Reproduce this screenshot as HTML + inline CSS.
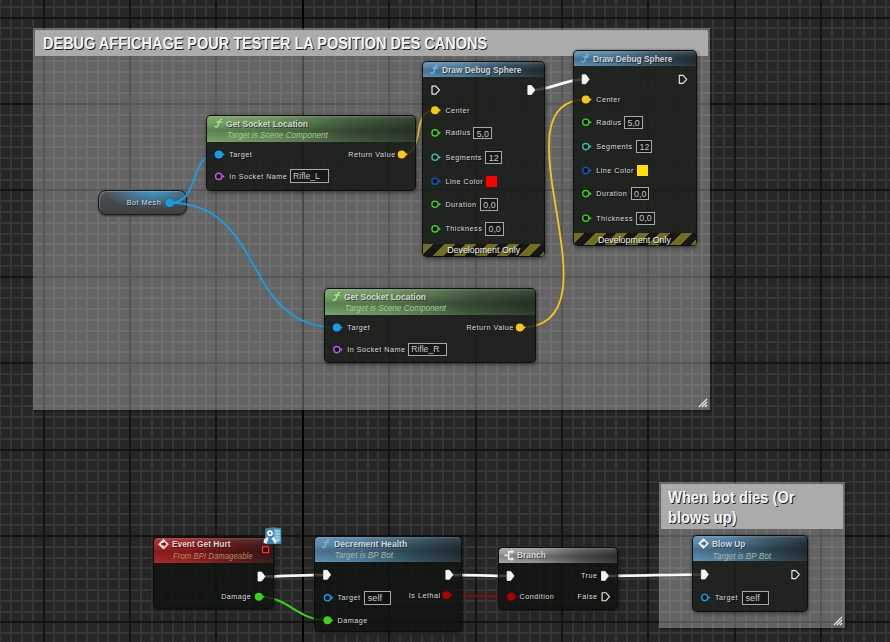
<!DOCTYPE html><html><head><meta charset="utf-8"><style>

*{margin:0;padding:0;box-sizing:border-box}
html,body{width:890px;height:642px;overflow:hidden;background:#262626;font-family:"Liberation Sans",sans-serif}
.abs{position:absolute}
.cm{position:absolute;background:rgba(255,255,255,0.286);box-shadow:1px 1px 2px rgba(0,0,0,0.35);outline:1px solid rgba(0,0,0,0.12)}
.cmh{position:absolute;background:#ababab;border-radius:0 2px 0 0}
.cmt{position:absolute;color:#f4f4f4;font-weight:bold;white-space:nowrap;transform-origin:0 0;transform:scaleX(0.89);text-shadow:1px 1px 0 #1a1a1a}
.node{position:absolute;border-radius:5px;background:rgba(15,17,15,0.8);border:1px solid rgba(14,14,14,0.95);box-shadow:0 0 3px rgba(0,0,0,0.35),1px 2px 4px rgba(0,0,0,0.35);overflow:hidden}
.hdr{position:absolute;left:0;top:0;right:0}
.ttl{position:absolute;color:#d6d6d6;font-weight:bold;white-space:nowrap;transform-origin:0 0;text-shadow:1px 1px 0 rgba(0,0,0,0.5)}
.sub{position:absolute;font-style:italic;white-space:nowrap;transform-origin:0 0}
.lbl{position:absolute;color:#dedede;white-space:nowrap;font-size:7.2px;line-height:10px;letter-spacing:0.5px;text-shadow:1px 1px 0 rgba(0,0,0,0.7)}
.box{position:absolute;border:1px solid #a8a8a8;background:rgba(10,10,10,0.45);color:#c8c8c8;font-size:9px;line-height:11px;text-align:left;padding-left:2.5px;padding-top:0.8px;white-space:nowrap}

</style></head><body>
<svg width="890" height="642" style="position:absolute;left:0;top:0"><rect width="890" height="642" fill="#262626"/><path fill="#363636" d="M-1 0h2V642h-2zM10 0h2V642h-2zM21 0h2V642h-2zM32 0h2V642h-2zM53 0h2V642h-2zM64 0h2V642h-2zM75 0h2V642h-2zM86 0h2V642h-2zM97 0h2V642h-2zM107 0h2V642h-2zM118 0h2V642h-2zM140 0h2V642h-2zM151 0h2V642h-2zM161 0h2V642h-2zM172 0h2V642h-2zM183 0h2V642h-2zM194 0h2V642h-2zM205 0h2V642h-2zM226 0h2V642h-2zM237 0h2V642h-2zM248 0h2V642h-2zM259 0h2V642h-2zM269 0h2V642h-2zM280 0h2V642h-2zM291 0h2V642h-2zM313 0h2V642h-2zM323 0h2V642h-2zM334 0h2V642h-2zM345 0h2V642h-2zM356 0h2V642h-2zM367 0h2V642h-2zM377 0h2V642h-2zM399 0h2V642h-2zM410 0h2V642h-2zM421 0h2V642h-2zM431 0h2V642h-2zM442 0h2V642h-2zM453 0h2V642h-2zM464 0h2V642h-2zM485 0h2V642h-2zM496 0h2V642h-2zM507 0h2V642h-2zM518 0h2V642h-2zM529 0h2V642h-2zM539 0h2V642h-2zM550 0h2V642h-2zM572 0h2V642h-2zM583 0h2V642h-2zM593 0h2V642h-2zM604 0h2V642h-2zM615 0h2V642h-2zM626 0h2V642h-2zM637 0h2V642h-2zM658 0h2V642h-2zM669 0h2V642h-2zM680 0h2V642h-2zM691 0h2V642h-2zM701 0h2V642h-2zM712 0h2V642h-2zM723 0h2V642h-2zM745 0h2V642h-2zM755 0h2V642h-2zM766 0h2V642h-2zM777 0h2V642h-2zM788 0h2V642h-2zM799 0h2V642h-2zM809 0h2V642h-2zM831 0h2V642h-2zM842 0h2V642h-2zM853 0h2V642h-2zM863 0h2V642h-2zM874 0h2V642h-2zM885 0h2V642h-2zM0 6h890v2H0zM0 27h890v2H0zM0 38h890v2H0zM0 49h890v2H0zM0 60h890v2H0zM0 71h890v2H0zM0 81h890v2H0zM0 92h890v2H0zM0 114h890v2H0zM0 125h890v2H0zM0 135h890v2H0zM0 146h890v2H0zM0 157h890v2H0zM0 168h890v2H0zM0 179h890v2H0zM0 200h890v2H0zM0 211h890v2H0zM0 222h890v2H0zM0 233h890v2H0zM0 243h890v2H0zM0 254h890v2H0zM0 265h890v2H0zM0 287h890v2H0zM0 297h890v2H0zM0 308h890v2H0zM0 319h890v2H0zM0 330h890v2H0zM0 341h890v2H0zM0 351h890v2H0zM0 373h890v2H0zM0 384h890v2H0zM0 395h890v2H0zM0 405h890v2H0zM0 416h890v2H0zM0 427h890v2H0zM0 438h890v2H0zM0 459h890v2H0zM0 470h890v2H0zM0 481h890v2H0zM0 492h890v2H0zM0 503h890v2H0zM0 513h890v2H0zM0 524h890v2H0zM0 546h890v2H0zM0 557h890v2H0zM0 567h890v2H0zM0 578h890v2H0zM0 589h890v2H0zM0 600h890v2H0zM0 611h890v2H0zM0 632h890v2H0z"/><path fill="#141414" d="M43 0h2V642h-2zM129 0h2V642h-2zM215 0h2V642h-2zM302 0h2V642h-2zM388 0h2V642h-2zM475 0h2V642h-2zM561 0h2V642h-2zM647 0h2V642h-2zM734 0h2V642h-2zM820 0h2V642h-2zM0 17h890v2H0zM0 103h890v2H0zM0 189h890v2H0zM0 276h890v2H0zM0 362h890v2H0zM0 449h890v2H0zM0 535h890v2H0zM0 621h890v2H0z"/><path fill="#000" d="M302 0h2V642h-2z"/></svg>
<div class="cm" style="left:33px;top:28px;width:677px;height:382px"></div>
<div class="cmh" style="left:35px;top:30px;width:673px;height:25.5px"></div>
<div class="cmt" style="left:42.5px;top:32.5px;font-size:16.3px;line-height:20px;transform:scaleX(0.89)">DEBUG AFFICHAGE POUR TESTER LA POSITION DES CANONS</div>
<svg style="position:absolute;left:698px;top:398px" width="10" height="10"><path d="M1 9L9 1M4 9L9 4M7 9L9 7" stroke="#f0f0f0" stroke-width="1.1" fill="none"/></svg>
<div class="cm" style="left:658.5px;top:481.5px;width:186.5px;height:146.10000000000002px"></div>
<div class="cmh" style="left:661px;top:484px;width:182px;height:45px"></div>
<div class="cmt" style="left:667.5px;top:488.3px;font-size:16.3px;line-height:19.6px;transform:scaleX(0.903)">When bot dies (Or<br>blows up)</div>
<svg style="position:absolute;left:833px;top:615.6px" width="10" height="10"><path d="M1 9L9 1M4 9L9 4M7 9L9 7" stroke="#f0f0f0" stroke-width="1.1" fill="none"/></svg>
<div class="abs" style="left:98.2px;top:190.3px;width:89.3px;height:25.2px;border-radius:8px;border:1.5px solid #161616;background:radial-gradient(ellipse 55% 80% at 62% 0%, rgba(60,165,220,0.85) 0%, rgba(60,160,215,0.4) 55%, rgba(60,160,215,0) 100%),linear-gradient(to bottom,#50555a 0%,#45484b 55%,#3d3f41 100%);box-shadow:0 1px 2px rgba(0,0,0,0.5), inset 1px 1px 0 rgba(255,255,255,0.22)"></div>
<div class="lbl" style="top:198.4px;font-size:7.2px;left:126.8px;">Bot Mesh</div>
<svg class="abs" style="left:0;top:0" width="890" height="642"><path d="M169.7 202.9C202.2 202.9 186.2 154.4 218.7 154.4" stroke="#16a0e4" stroke-width="1.8" fill="none"/><path d="M169.7 202.9C267.2 202.9 240.0 327.6 337.5 327.6" stroke="#16a0e4" stroke-width="1.8" fill="none"/><path d="M401.7 154.4C427.5 154.4 409.2 110.3 435 110.3" stroke="#f7c61a" stroke-width="1.8" fill="none"/><path d="M520.5 327.6C628.0433333333333 327.6 488.0333333333333 99.6 585.8 99.6" stroke="#f7c61a" stroke-width="1.8" fill="none"/><path d="M531.2 90C552.7666666666668 90 563.6333333333333 79.3 585.2 79.3" stroke="#f8f8f8" stroke-width="2.7" fill="none"/><path d="M261.3 576.5C283.7666666666667 576.5 304.5333333333333 574.8 327 574.8" stroke="#f8f8f8" stroke-width="2.7" fill="none"/><path d="M449.2 574.8C469.96666666666664 574.8 489.6333333333333 575.9 510.4 575.9" stroke="#f8f8f8" stroke-width="2.7" fill="none"/><path d="M604.8 575.9C638.5666666666666 575.9 670.9333333333334 574.5 704.7 574.5" stroke="#f8f8f8" stroke-width="2.7" fill="none"/><path d="M258.8 596.8C289.53333333333336 596.8 296.76666666666665 620.3 327.5 620.3" stroke="#3bd21a" stroke-width="2" fill="none"/><path d="M446.4 595.2C468.46666666666664 595.2 489.1333333333333 596.6 511.2 596.6" stroke="#a80000" stroke-width="1.5" fill="none"/></svg>
<div class="node" style="left:206.3px;top:114.9px;width:209.59999999999997px;height:76.19999999999999px"><div class="hdr" style="height:26.0px;background:linear-gradient(to bottom, rgba(255,255,255,0.20) 0px, rgba(255,255,255,0.06) 2.5px, rgba(0,0,0,0.0) 30%, rgba(0,0,0,0.20) 55%, rgba(0,0,0,0.05) 85%, rgba(255,255,255,0.03) 100%),linear-gradient(to right, #74a166 0%, #66905a 30%, #40573c 68%, #2c3a2c 100%)"></div></div>
<div class="ttl" style="left:226.2px;top:117.60000000000001px;font-size:9.4px;line-height:11.4px;transform:scaleX(0.905);">Get Socket Location</div>
<div class="sub" style="left:226.7px;top:130.9px;font-size:8.2px;line-height:10.2px;color:#a9c896;transform:scaleX(1.0)">Target is Scene Component</div>
<div class="lbl" style="top:149.8px;font-size:7.2px;left:229.2px;">Target</div>
<div class="lbl" style="top:171.8px;font-size:7.2px;left:229.2px;">In Socket Name</div>
<div class="box" style="left:289.6px;top:169.4px;width:39.0px;height:13.200000000000017px;font-size:8.6px;line-height:11.200000000000017px">Rifle_L</div>
<div class="lbl" style="top:149.8px;font-size:7.2px;right:494.3px;">Return Value</div>
<div class="node" style="left:324.3px;top:288.1px;width:211.49999999999994px;height:74.59999999999997px"><div class="hdr" style="height:26.0px;background:linear-gradient(to bottom, rgba(255,255,255,0.20) 0px, rgba(255,255,255,0.06) 2.5px, rgba(0,0,0,0.0) 30%, rgba(0,0,0,0.20) 55%, rgba(0,0,0,0.05) 85%, rgba(255,255,255,0.03) 100%),linear-gradient(to right, #74a166 0%, #66905a 30%, #40573c 68%, #2c3a2c 100%)"></div></div>
<div class="ttl" style="left:344.3px;top:290.8px;font-size:9.4px;line-height:11.4px;transform:scaleX(0.905);">Get Socket Location</div>
<div class="sub" style="left:344.8px;top:304.1px;font-size:8.2px;line-height:10.2px;color:#a9c896;transform:scaleX(1.0)">Target is Scene Component</div>
<div class="lbl" style="top:323.0px;font-size:7.2px;left:347.3px;">Target</div>
<div class="lbl" style="top:345.0px;font-size:7.2px;left:347.3px;">In Socket Name</div>
<div class="box" style="left:407.70000000000005px;top:342.6px;width:39.0px;height:13.199999999999989px;font-size:8.6px;line-height:11.199999999999989px">Rifle_R</div>
<div class="lbl" style="top:323.0px;font-size:7.2px;right:376.20000000000005px;">Return Value</div>
<div class="node" style="left:422.3px;top:61.1px;width:122.30000000000001px;height:195.6px"><div class="hdr" style="height:15.199999999999996px;background:linear-gradient(to bottom, rgba(255,255,255,0.20) 0px, rgba(255,255,255,0.06) 2.5px, rgba(0,0,0,0.0) 30%, rgba(0,0,0,0.20) 55%, rgba(0,0,0,0.05) 85%, rgba(255,255,255,0.03) 100%),linear-gradient(to right, #5d8cae 0%, #4f7d9e 30%, #33505f 68%, #263139 100%)"></div></div>
<div class="ttl" style="left:441.7px;top:64.1px;font-size:9.4px;line-height:11.4px;transform:scaleX(0.89);">Draw Debug Sphere</div>
<div class="lbl" style="top:105.7px;font-size:7.2px;left:445.4px;">Center</div>
<div class="lbl" style="top:128.29999999999998px;font-size:7.2px;left:445.4px;">Radius</div>
<div class="lbl" style="top:152.70000000000002px;font-size:7.2px;left:445.4px;">Segments</div>
<div class="lbl" style="top:176.6px;font-size:7.2px;left:445.4px;">Line Color</div>
<div class="lbl" style="top:199.70000000000002px;font-size:7.2px;left:445.4px;">Duration</div>
<div class="lbl" style="top:224.29999999999998px;font-size:7.2px;left:445.4px;">Thickness</div>
<div class="box" style="left:473.2px;top:127.0px;width:18.69999999999999px;height:12.399999999999977px;font-size:8.8px;line-height:10.399999999999977px">5,0</div>
<div class="box" style="left:485.29999999999995px;top:150.8px;width:16.400000000000034px;height:13.0px;font-size:8.8px;line-height:11.0px">12</div>
<div class="abs" style="left:486.2px;top:175.5px;width:11.099999999999966px;height:11.099999999999994px;background:#ff0000"></div>
<div class="box" style="left:479.79999999999995px;top:197.89999999999998px;width:18.600000000000023px;height:13.0px;font-size:8.8px;line-height:11.0px">0,0</div>
<div class="box" style="left:485.0px;top:222.3px;width:18.799999999999955px;height:13.399999999999977px;font-size:8.8px;line-height:11.399999999999977px">0,0</div>
<div class="abs" style="left:423.3px;top:243.89999999999998px;width:120.30000000000001px;height:11.8px;border-radius:0 0 2px 2px;background:repeating-linear-gradient(135deg, #716e22 0px, #716e22 7.6px, #161616 7.6px, #161616 15.2px)"></div>
<div class="lbl" style="left:422.4px;width:122.5px;text-align:center;top:245.2px;font-size:8.9px;letter-spacing:0;line-height:10px;color:#f0f0f0;text-shadow:1px 1px 0 rgba(0,0,0,0.8)">Development Only</div>
<div class="node" style="left:573.3px;top:49.9px;width:123.45000000000005px;height:195.7px"><div class="hdr" style="height:15.199999999999996px;background:linear-gradient(to bottom, rgba(255,255,255,0.20) 0px, rgba(255,255,255,0.06) 2.5px, rgba(0,0,0,0.0) 30%, rgba(0,0,0,0.20) 55%, rgba(0,0,0,0.05) 85%, rgba(255,255,255,0.03) 100%),linear-gradient(to right, #5d8cae 0%, #4f7d9e 30%, #33505f 68%, #263139 100%)"></div></div>
<div class="ttl" style="left:592.5px;top:53.4px;font-size:9.4px;line-height:11.4px;transform:scaleX(0.89);">Draw Debug Sphere</div>
<div class="lbl" style="top:95.0px;font-size:7.2px;left:596.2px;">Center</div>
<div class="lbl" style="top:117.6px;font-size:7.2px;left:596.2px;">Radius</div>
<div class="lbl" style="top:142.0px;font-size:7.2px;left:596.2px;">Segments</div>
<div class="lbl" style="top:165.9px;font-size:7.2px;left:596.2px;">Line Color</div>
<div class="lbl" style="top:189.0px;font-size:7.2px;left:596.2px;">Duration</div>
<div class="lbl" style="top:213.6px;font-size:7.2px;left:596.2px;">Thickness</div>
<div class="box" style="left:624.0px;top:116.30000000000001px;width:18.700000000000045px;height:12.399999999999977px;font-size:8.8px;line-height:10.399999999999977px">5,0</div>
<div class="box" style="left:636.1px;top:140.1px;width:16.399999999999977px;height:13.0px;font-size:8.8px;line-height:11.0px">12</div>
<div class="abs" style="left:637.0px;top:164.8px;width:11.100000000000023px;height:11.099999999999994px;background:#ffe000"></div>
<div class="box" style="left:630.6px;top:187.2px;width:18.600000000000023px;height:13.0px;font-size:8.8px;line-height:11.0px">0,0</div>
<div class="box" style="left:635.8000000000001px;top:211.6px;width:18.799999999999955px;height:13.400000000000006px;font-size:8.8px;line-height:11.400000000000006px">0,0</div>
<div class="abs" style="left:574.3px;top:232.79999999999998px;width:121.45000000000005px;height:11.8px;border-radius:0 0 2px 2px;background:repeating-linear-gradient(135deg, #716e22 0px, #716e22 7.6px, #161616 7.6px, #161616 15.2px)"></div>
<div class="lbl" style="left:573.2px;width:122.5px;text-align:center;top:234.5px;font-size:8.9px;letter-spacing:0;line-height:10px;color:#f0f0f0;text-shadow:1px 1px 0 rgba(0,0,0,0.8)">Development Only</div>
<div class="node" style="left:153.1px;top:536.7px;width:120.6px;height:72.5px"><div class="hdr" style="height:25.299999999999955px;background:linear-gradient(to bottom, rgba(255,255,255,0.20) 0px, rgba(255,255,255,0.06) 2.5px, rgba(0,0,0,0.0) 30%, rgba(0,0,0,0.20) 55%, rgba(0,0,0,0.05) 85%, rgba(255,255,255,0.03) 100%),linear-gradient(to right, #a82626 0%, #9a2020 30%, #5e1a1a 68%, #3a1c1c 100%)"></div></div>
<div class="ttl" style="left:172px;top:538.2px;font-size:9.4px;line-height:11.4px;transform:scaleX(0.89);">Event Get Hurt</div>
<div class="sub" style="left:172.5px;top:551.6px;font-size:8.2px;line-height:10.2px;color:#b08a6a;transform:scaleX(0.956)">From BPI Damageable</div>
<div class="lbl" style="top:592.1999999999999px;font-size:7.2px;right:638.7px;">Damage</div>
<div class="node" style="left:314.2px;top:535.6px;width:147.40000000000003px;height:96.0px"><div class="hdr" style="height:25.799999999999955px;background:linear-gradient(to bottom, rgba(255,255,255,0.20) 0px, rgba(255,255,255,0.06) 2.5px, rgba(0,0,0,0.0) 30%, rgba(0,0,0,0.20) 55%, rgba(0,0,0,0.05) 85%, rgba(255,255,255,0.03) 100%),linear-gradient(to right, #5d8cae 0%, #4f7d9e 30%, #33505f 68%, #263139 100%)"></div></div>
<div class="ttl" style="left:334px;top:537.5px;font-size:9.4px;line-height:11.4px;transform:scaleX(0.918);">Decrement Health</div>
<div class="sub" style="left:334.5px;top:551.1px;font-size:8.2px;line-height:10.2px;color:#a8b89c;transform:scaleX(1.0)">Target is BP Bot</div>
<div class="lbl" style="top:593.1999999999999px;font-size:7.2px;left:337.5px;">Target</div>
<div class="box" style="left:364.2px;top:591px;width:26.80000000000001px;height:13.799999999999955px;font-size:9.2px;line-height:11.799999999999955px">self</div>
<div class="lbl" style="top:590.6px;font-size:7.2px;right:449.5px;">Is Lethal</div>
<div class="lbl" style="top:615.6999999999999px;font-size:7.2px;left:337.5px;">Damage</div>
<div class="node" style="left:497.9px;top:547.2px;width:119.89999999999998px;height:62.799999999999955px"><div class="hdr" style="height:15.099999999999909px;background:linear-gradient(to bottom, rgba(255,255,255,0.20) 0px, rgba(255,255,255,0.06) 2.5px, rgba(0,0,0,0.0) 30%, rgba(0,0,0,0.20) 55%, rgba(0,0,0,0.05) 85%, rgba(255,255,255,0.03) 100%),linear-gradient(to right, #a4a4a4 0%, #939393 30%, #585858 68%, #383838 100%)"></div></div>
<div class="ttl" style="left:517px;top:549.3px;font-size:9.6px;line-height:11.6px;transform:scaleX(0.87);">Branch</div>
<div class="lbl" style="top:571.3px;font-size:7.2px;right:292.5px;">True</div>
<div class="lbl" style="top:592.0px;font-size:7.2px;left:519.5px;">Condition</div>
<div class="lbl" style="top:592.0px;font-size:7.2px;right:292.5px;">False</div>
<div class="node" style="left:692.2px;top:535.1px;width:115.69999999999993px;height:76.5px"><div class="hdr" style="height:25.399999999999977px;background:linear-gradient(to bottom, rgba(255,255,255,0.20) 0px, rgba(255,255,255,0.06) 2.5px, rgba(0,0,0,0.0) 30%, rgba(0,0,0,0.20) 55%, rgba(0,0,0,0.05) 85%, rgba(255,255,255,0.03) 100%),linear-gradient(to right, #5d8cae 0%, #4f7d9e 30%, #33505f 68%, #263139 100%)"></div></div>
<div class="ttl" style="left:712px;top:537.8px;font-size:9.4px;line-height:11.4px;transform:scaleX(0.89);">Blow Up</div>
<div class="sub" style="left:712.5px;top:551.7px;font-size:8.2px;line-height:10.2px;color:#a8b89c;transform:scaleX(1.0)">Target is BP Bot</div>
<div class="lbl" style="top:592.9px;font-size:7.2px;left:715px;">Target</div>
<div class="box" style="left:742px;top:591px;width:26.600000000000023px;height:13.600000000000023px;font-size:9.2px;line-height:11.600000000000023px">self</div>
<svg class="abs" style="left:0;top:0" width="890" height="642"><circle cx="169.7" cy="202.9" r="4.0" fill="#16a0e4"/><path d="M173.29999999999998 201.1L175.7 202.9L173.29999999999998 204.70000000000002Z" fill="#16a0e4"/><path transform="translate(214.60000000000002 119.10000000000001)" d="M0.4 7.3C1.2 8.4 2.5 8.3 3.1 6.9L5.0 1.7C5.5 0.4 6.4 -0.1 7.0 0.5M2.4 2.7L6.9 3.0" fill="none" stroke="#a6ec8e" stroke-width="1.35" stroke-linecap="round"/><circle cx="218.7" cy="154.4" r="4.0" fill="#16a0e4"/><path d="M222.29999999999998 152.6L224.7 154.4L222.29999999999998 156.20000000000002Z" fill="#16a0e4"/><circle cx="218.7" cy="176.4" r="3.1" fill="#101010" stroke="#c05ae8" stroke-width="1.35"/><path d="M222.29999999999998 174.6L224.7 176.4L222.29999999999998 178.20000000000002Z" fill="#c05ae8"/><circle cx="401.7" cy="154.4" r="4.0" fill="#f7c61a"/><path d="M405.3 152.6L407.7 154.4L405.3 156.20000000000002Z" fill="#f7c61a"/><path transform="translate(332.6 292.3)" d="M0.4 7.3C1.2 8.4 2.5 8.3 3.1 6.9L5.0 1.7C5.5 0.4 6.4 -0.1 7.0 0.5M2.4 2.7L6.9 3.0" fill="none" stroke="#a6ec8e" stroke-width="1.35" stroke-linecap="round"/><circle cx="336.8" cy="327.6" r="4.0" fill="#16a0e4"/><path d="M340.40000000000003 325.8L342.8 327.6L340.40000000000003 329.40000000000003Z" fill="#16a0e4"/><circle cx="336.8" cy="349.6" r="3.1" fill="#101010" stroke="#c05ae8" stroke-width="1.35"/><path d="M340.40000000000003 347.8L342.8 349.6L340.40000000000003 351.40000000000003Z" fill="#c05ae8"/><circle cx="519.8" cy="327.6" r="4.0" fill="#f7c61a"/><path d="M523.4 325.8L525.8 327.6L523.4 329.40000000000003Z" fill="#f7c61a"/><path transform="translate(430.5 65.3)" d="M0.4 7.3C1.2 8.4 2.5 8.3 3.1 6.9L5.0 1.7C5.5 0.4 6.4 -0.1 7.0 0.5M2.4 2.7L6.9 3.0" fill="none" stroke="#6cb8ee" stroke-width="1.35" stroke-linecap="round"/><path d="M432.0 86.1L435.8 86.1L439.4 90.0L435.8 94.1L432.0 94.1Z" fill="none" stroke="#e8e8e8" stroke-width="1.15" stroke-linejoin="round"/><path d="M527.9 85.5L531.5 85.5L534.9 90.0L531.5 94.5L527.9 94.5Z" fill="#f4f4f4" stroke="#f4f4f4" stroke-width="0.8" stroke-linejoin="round"/><circle cx="435.0" cy="110.3" r="4.0" fill="#f7c61a"/><path d="M438.6 108.5L441.0 110.3L438.6 112.1Z" fill="#f7c61a"/><circle cx="435.0" cy="132.89999999999998" r="3.1" fill="#101010" stroke="#3bd21a" stroke-width="1.35"/><path d="M438.6 131.09999999999997L441.0 132.89999999999998L438.6 134.7Z" fill="#3bd21a"/><circle cx="435.0" cy="157.3" r="3.1" fill="#101010" stroke="#2ec3a8" stroke-width="1.35"/><path d="M438.6 155.5L441.0 157.3L438.6 159.10000000000002Z" fill="#2ec3a8"/><circle cx="435.0" cy="181.2" r="3.1" fill="#101010" stroke="#0b5cc8" stroke-width="1.35"/><path d="M438.6 179.39999999999998L441.0 181.2L438.6 183.0Z" fill="#0b5cc8"/><circle cx="435.0" cy="204.3" r="3.1" fill="#101010" stroke="#3bd21a" stroke-width="1.35"/><path d="M438.6 202.5L441.0 204.3L438.6 206.10000000000002Z" fill="#3bd21a"/><circle cx="435.0" cy="228.89999999999998" r="3.1" fill="#101010" stroke="#3bd21a" stroke-width="1.35"/><path d="M438.6 227.09999999999997L441.0 228.89999999999998L438.6 230.7Z" fill="#3bd21a"/><path transform="translate(581.5 54.1)" d="M0.4 7.3C1.2 8.4 2.5 8.3 3.1 6.9L5.0 1.7C5.5 0.4 6.4 -0.1 7.0 0.5M2.4 2.7L6.9 3.0" fill="none" stroke="#6cb8ee" stroke-width="1.35" stroke-linecap="round"/><path d="M582.2 74.8L585.8000000000001 74.8L589.2 79.3L585.8000000000001 83.8L582.2 83.8Z" fill="#f4f4f4" stroke="#f4f4f4" stroke-width="0.8" stroke-linejoin="round"/><path d="M679.3000000000001 75.39999999999999L683.1 75.39999999999999L686.7 79.3L683.1 83.39999999999999L679.3000000000001 83.39999999999999Z" fill="none" stroke="#e8e8e8" stroke-width="1.15" stroke-linejoin="round"/><circle cx="585.8000000000001" cy="99.6" r="4.0" fill="#f7c61a"/><path d="M589.4000000000001 97.8L591.8000000000001 99.6L589.4000000000001 101.39999999999999Z" fill="#f7c61a"/><circle cx="585.8000000000001" cy="122.19999999999999" r="3.1" fill="#101010" stroke="#3bd21a" stroke-width="1.35"/><path d="M589.4000000000001 120.39999999999999L591.8000000000001 122.19999999999999L589.4000000000001 123.99999999999999Z" fill="#3bd21a"/><circle cx="585.8000000000001" cy="146.6" r="3.1" fill="#101010" stroke="#2ec3a8" stroke-width="1.35"/><path d="M589.4000000000001 144.79999999999998L591.8000000000001 146.6L589.4000000000001 148.4Z" fill="#2ec3a8"/><circle cx="585.8000000000001" cy="170.5" r="3.1" fill="#101010" stroke="#0b5cc8" stroke-width="1.35"/><path d="M589.4000000000001 168.7L591.8000000000001 170.5L589.4000000000001 172.3Z" fill="#0b5cc8"/><circle cx="585.8000000000001" cy="193.6" r="3.1" fill="#101010" stroke="#3bd21a" stroke-width="1.35"/><path d="M589.4000000000001 191.79999999999998L591.8000000000001 193.6L589.4000000000001 195.4Z" fill="#3bd21a"/><circle cx="585.8000000000001" cy="218.2" r="3.1" fill="#101010" stroke="#3bd21a" stroke-width="1.35"/><path d="M589.4000000000001 216.39999999999998L591.8000000000001 218.2L589.4000000000001 220.0Z" fill="#3bd21a"/><path d="M163.5 539.3000000000001L168.4 544.2L163.5 549.1L158.6 544.2Z" fill="#f2f2f2" stroke="#f2f2f2" stroke-width="0.8" stroke-linejoin="miter"/><path d="M163.7 541.1L166.6 544.2L163.7 547.3000000000001Z" fill="#8e2020"/><path d="M161.3 543.0H164.1V545.4000000000001H161.3Z" fill="#8e2020"/><path d="M265.2 528.6L273 527.2L281 528.2L281.3 544L265 544Z" fill="#3f87ad"/><path d="M274 529L280.5 529.5L280.8 542L274.5 542Z" fill="#6db3cf"/><path d="M275.5 531h4M275.5 534h4M275.5 537h4M275.5 540h4" stroke="#cdeaf2" stroke-width="0.9"/><circle cx="270" cy="533.2" r="2.9" fill="#f4f4f4"/><circle cx="270" cy="533.2" r="0.9" fill="#203040"/><path d="M264 539.5L267.5 536.8L268.5 538.5L266.5 543.5L263.5 543Z" fill="#f0f0f0"/><path d="M271.5 538.5L274 536.5L276.8 542.5L275 543.8Z" fill="#f0f0f0"/><rect x="262.6" y="546.7" width="5.9" height="5.9" fill="#140606" stroke="#ff2a2a" stroke-width="1.4"/><path d="M258.0 572.0L261.6 572.0L265.0 576.5L261.6 581.0L258.0 581.0Z" fill="#f4f4f4" stroke="#f4f4f4" stroke-width="0.8" stroke-linejoin="round"/><circle cx="258.8" cy="596.8" r="4.0" fill="#3bd21a"/><path d="M262.40000000000003 595.0L264.8 596.8L262.40000000000003 598.5999999999999Z" fill="#3bd21a"/><path transform="translate(322.0 539.4)" d="M0.4 7.3C1.2 8.4 2.5 8.3 3.1 6.9L5.0 1.7C5.5 0.4 6.4 -0.1 7.0 0.5M2.4 2.7L6.9 3.0" fill="none" stroke="#6cb8ee" stroke-width="1.35" stroke-linecap="round"/><path d="M323.7 570.3L327.3 570.3L330.7 574.8L327.3 579.3L323.7 579.3Z" fill="#f4f4f4" stroke="#f4f4f4" stroke-width="0.8" stroke-linejoin="round"/><path d="M445.9 570.3L449.5 570.3L452.9 574.8L449.5 579.3L445.9 579.3Z" fill="#f4f4f4" stroke="#f4f4f4" stroke-width="0.8" stroke-linejoin="round"/><circle cx="327.5" cy="597.8" r="3.1" fill="#101010" stroke="#16a0e4" stroke-width="1.35"/><path d="M331.1 596.0L333.5 597.8L331.1 599.5999999999999Z" fill="#16a0e4"/><circle cx="446.4" cy="595.2" r="4.0" fill="#a80000"/><path d="M450.0 593.4000000000001L452.4 595.2L450.0 597.0Z" fill="#a80000"/><circle cx="327.5" cy="620.3" r="4.0" fill="#3bd21a"/><path d="M331.1 618.5L333.5 620.3L331.1 622.0999999999999Z" fill="#3bd21a"/><path d="M504.5 555.4H507.7M512.1 551.8H508.7V559.0H512.1" fill="none" stroke="#f0f0f0" stroke-width="1.6"/><path d="M511.5 549.6L514.1 551.8L511.5 554.0ZM511.5 556.8L514.1 559.0L511.5 561.1999999999999Z" fill="#f0f0f0"/><path d="M507.09999999999997 571.4L510.7 571.4L514.0999999999999 575.9L510.7 580.4L507.09999999999997 580.4Z" fill="#f4f4f4" stroke="#f4f4f4" stroke-width="0.8" stroke-linejoin="round"/><path d="M601.5 571.4L605.1 571.4L608.5 575.9L605.1 580.4L601.5 580.4Z" fill="#f4f4f4" stroke="#f4f4f4" stroke-width="0.8" stroke-linejoin="round"/><circle cx="511.2" cy="596.6" r="4.0" fill="#a80000"/><path d="M514.8 594.8000000000001L517.2 596.6L514.8 598.4Z" fill="#a80000"/><path d="M602.1 592.7L605.9 592.7L609.5 596.6L605.9 600.7L602.1 600.7Z" fill="none" stroke="#e8e8e8" stroke-width="1.15" stroke-linejoin="round"/><path d="M703.5 538.6L708.4 543.5L703.5 548.4L698.6 543.5Z" fill="#f2f2f2" stroke="#f2f2f2" stroke-width="0.8" stroke-linejoin="miter"/><path d="M703.7 540.4L706.6 543.5L703.7 546.6Z" fill="#456e8c"/><path d="M701.3 542.3H704.1V544.7H701.3Z" fill="#456e8c"/><path d="M701.4000000000001 570.0L705.0000000000001 570.0L708.4000000000001 574.5L705.0000000000001 579.0L701.4000000000001 579.0Z" fill="#f4f4f4" stroke="#f4f4f4" stroke-width="0.8" stroke-linejoin="round"/><path d="M791.9000000000001 570.6L795.7 570.6L799.3000000000001 574.5L795.7 578.6L791.9000000000001 578.6Z" fill="none" stroke="#e8e8e8" stroke-width="1.15" stroke-linejoin="round"/><circle cx="704.7" cy="597.5" r="3.1" fill="#101010" stroke="#16a0e4" stroke-width="1.35"/><path d="M708.3000000000001 595.7L710.7 597.5L708.3000000000001 599.3Z" fill="#16a0e4"/></svg>
</body></html>
